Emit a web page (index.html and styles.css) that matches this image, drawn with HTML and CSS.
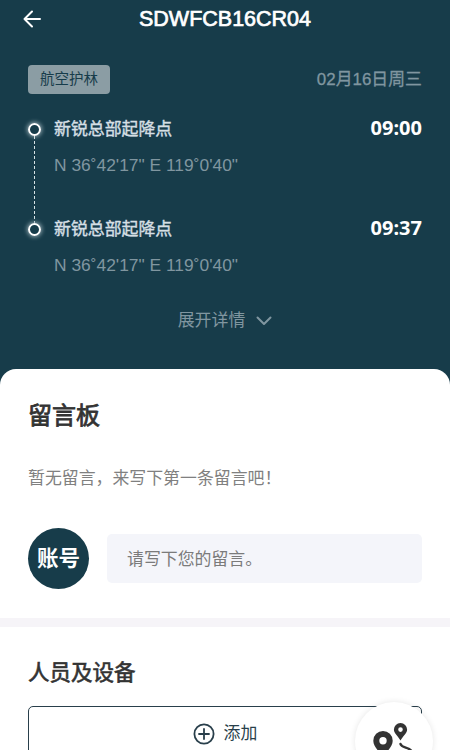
FILE: index.html
```html
<!DOCTYPE html>
<html lang="zh-CN">
<head>
<meta charset="utf-8">
<title>SDWFCB16CR04</title>
<link rel="stylesheet" href="styles.css">
</head>
<body>
<div class="screen">
  <header class="navbar">
    <svg class="back" width="18" height="18" viewBox="0 0 18 18"><path d="M9 1.500 1.500 9 9 16.500M1.500 9H17"/></svg>
    <h1 class="title">SDWFCB16CR04</h1>
  </header>
  <section class="flight">
    <div class="meta">
      <span class="tag">航空护林</span>
      <span class="date">02月16日周三</span>
    </div>
    <div class="stop">
      <div class="rail"><i class="dot"></i><i class="dash"></i></div>
      <div class="place"><div class="name">新锐总部起降点</div><div class="coord">N 36˚42'17" E 119˚0'40"</div></div>
      <div class="time">09:00</div>
    </div>
    <div class="stop">
      <div class="rail"><i class="dot"></i></div>
      <div class="place"><div class="name">新锐总部起降点</div><div class="coord">N 36˚42'17" E 119˚0'40"</div></div>
      <div class="time">09:37</div>
    </div>
    <div class="expand">
      <span>展开详情</span>
      <svg width="16" height="10" viewBox="0 0 16 10"><path d="M1.500 1.500 8 8 14.500 1.500"/></svg>
    </div>
  </section>
  <main class="sheet">
    <section class="board">
      <h2 class="board-title">留言板</h2>
      <p class="empty">暂无留言，来写下第一条留言吧！</p>
      <div class="compose">
        <div class="avatar">账号</div>
        <div class="input">请写下您的留言。</div>
      </div>
    </section>
    <section class="crew">
      <h2 class="crew-title">人员及设备</h2>
      <div class="add">
        <svg width="22" height="22" viewBox="0 0 22 22"><circle cx="11" cy="11" r="9.600"/><path d="M11 6v10M6 11h10"/></svg>
        <span>添加</span>
      </div>
    </section>
  </main>
  <div class="fab">
    <svg width="78" height="78" viewBox="0 0 78 78">
      <path class="pin" fill-rule="evenodd" d="M28 29a9.700 9.700 0 0 0-9.700 9.700c0 6 6 10.500 9.700 17 3.700-6.500 9.700-11 9.700-17a9.700 9.700 0 0 0-9.700-9.700zm0 6a3.700 3.700 0 1 1 0 7.400 3.700 3.700 0 0 1 0-7.400z"/>
      <path class="pin" fill-rule="evenodd" d="M45.500 21a6.600 6.600 0 0 0-6.600 6.600c0 4.200 4.200 6.400 6.600 11 2.400-4.600 6.600-6.800 6.600-11a6.600 6.600 0 0 0-6.600-6.600zm0 4.300a2.300 2.300 0 1 1 0 4.600 2.300 2.300 0 0 1 0-4.600z"/>
      <path class="route" d="M45.500 42c1 4 8 3 10.500 6.500s-6 8-20 8"/>
    </svg>
  </div>
</div>
</body>
</html>
```
FILE: styles.css
```css
* { box-sizing: border-box; }
body { margin: 0; font-family: "Liberation Sans", "Noto Sans CJK SC", sans-serif; }
h1, h2, p { margin: 0; }
svg { display: block; fill: none; stroke-linecap: round; stroke-linejoin: round; }
.screen { position: relative; height: 750px; overflow: hidden; background: #173c4a; }
.navbar { display: grid; grid-template-columns: 24px 1fr 24px; align-items: center; height: 38px; padding: 0 23px; }
.back { stroke: #fff; stroke-width: 2; }
.title { color: #fff; font-size: 21.500px; font-weight: 400; line-height: 38px; text-align: center; white-space: nowrap; -webkit-text-stroke: .7px #fff; }
.flight { height: 331px; padding: 27px 28px 0; }
.meta { display: flex; justify-content: space-between; align-items: center; height: 29px; }
.tag { width: 82px; height: 29px; border-radius: 4px; background: #8b9da4; color: #173c4a; font-size: 14.500px; line-height: 29px; text-align: center; }
.date { color: #8096a0; font-size: 16.900px; line-height: 31px; -webkit-text-stroke: .3px #8096a0; }
.stop { display: flex; height: 100px; }
.meta + .stop { margin-top: 19px; }
.rail { display: flex; flex-direction: column; align-items: center; width: 13px; margin-right: 13px; padding-top: 10px; }
.dot { flex: none; width: 13px; height: 13px; border: 2.500px solid #fff; border-radius: 50%; box-shadow: 0 0 4px 1px #91a7af; }
.dash { flex: none; width: 1px; height: 87px; margin-left: -1px; background: repeating-linear-gradient(#d8e2e5 0 3px, transparent 3px 5px); }
.place { flex: 1; }
.name { height: 30px; color: #d5dfe4; font-size: 16.900px; line-height: 33px; -webkit-text-stroke: .4px #d5dfe4; }
.coord { margin-top: 7px; color: #8096a0; font-size: 17.400px; line-height: 30px; white-space: nowrap; }
.time { color: #fff; font: 700 20px/30px "Noto Sans", sans-serif; }
.expand { display: flex; justify-content: center; align-items: center; gap: 11px; height: 30px; margin-top: -7px; color: #8096a0; font-size: 16.900px; line-height: 32px; }
.expand svg { stroke: #8096a0; stroke-width: 2; }
.sheet { height: 381px; border-radius: 16px 16px 0 0; background: #fff; }
.board { height: 258px; padding: 28px 28px 0; border-bottom: 9px solid #f6f4f8; }
.board-title { color: #333; font-size: 24px; font-weight: 400; line-height: 38px; -webkit-text-stroke: .8px #333; }
.empty { margin-top: 29px; color: #808080; font-size: 16.900px; line-height: 30px; white-space: nowrap; }
.compose { display: flex; align-items: center; gap: 18px; margin-top: 34px; }
.avatar { width: 61px; height: 61px; border-radius: 50%; background: #173c4a; color: #fff; font-size: 21.500px; font-weight: 700; line-height: 62px; text-align: center; }
.input { flex: 1; height: 49px; padding-left: 20px; border-radius: 5px; background: #f4f5fa; color: #7b7b7b; font-size: 16.900px; line-height: 51px; }
.crew { padding: 30px 28px 0; }
.crew-title { color: #333; font-size: 21.500px; font-weight: 400; line-height: 32px; -webkit-text-stroke: .6px #333; }
.add { display: flex; justify-content: center; align-items: center; gap: 9px; height: 56px; margin-top: 17px; border: 1px solid #293f4b; border-radius: 5px; color: #293f4b; font-size: 16.900px; line-height: 24px; padding-bottom: 1px; }
.add svg { stroke: #293f4b; stroke-width: 1.800; }
.fab { position: absolute; left: 355px; top: 702px; width: 78px; height: 78px; border-radius: 50%; background: #fff; box-shadow: 0 0 6px rgba(0, 0, 0, .1); }
.pin { fill: #333; }
.route { stroke: #333; stroke-width: 2.500; }
```
